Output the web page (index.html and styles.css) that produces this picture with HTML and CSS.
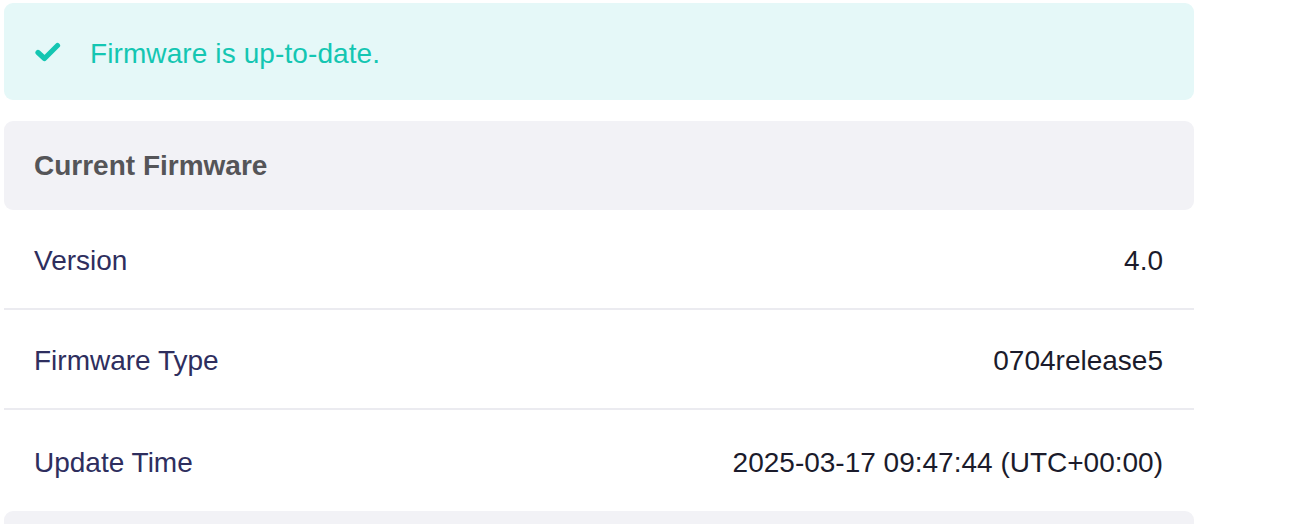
FILE: index.html
```html
<!DOCTYPE html>
<html>
<head>
<meta charset="utf-8">
<link rel="stylesheet" href="styles.css">
</head>
<body>
<div class="page">
  <div class="alert">
    <svg class="check" viewBox="0 0 26 20" width="26" height="20"><polyline points="3,10.5 9.5,16.5 22.5,3.5" fill="none" stroke="#14c6b2" stroke-width="5.2" stroke-linecap="round" stroke-linejoin="round"/></svg>
    <span class="alert-text">Firmware is up-to-date.</span>
  </div>
  <div class="section">
    <div class="section-head">Current Firmware</div>
    <div class="row"><span class="label">Version</span><span class="value">4.0</span></div>
    <div class="row"><span class="label">Firmware Type</span><span class="value">0704release5</span></div>
    <div class="row last"><span class="label">Update Time</span><span class="value">2025-03-17 09:47:44 (UTC+00:00)</span></div>
  </div>
  <div class="section-next"></div>
</div>
</body>
</html>
```
FILE: styles.css
```css
html, body {
  margin: 0;
  padding: 0;
  background: #ffffff;
  overflow: hidden;
}
body {
  font-family: "Liberation Sans", Arial, Helvetica, sans-serif;
  font-size: 28px;
}
.page {
  width: 1190px;
  padding: 3px 0 0 4px;
  display: flex;
  flex-direction: column;
}
.alert {
  height: 97px;
  box-sizing: border-box;
  background: #e5f8f8;
  border-radius: 9px;
  display: flex;
  align-items: center;
  padding-left: 31px;
  padding-top: 4px;
}
.check {
  display: block;
  margin-right: 29px;
  margin-top: -4px;
}
.alert-text {
  color: #14c6b2;
  font-size: 28px;
  letter-spacing: 0.1px;
}
.section {
  margin-top: 21px;
  display: flex;
  flex-direction: column;
}
.section-head {
  height: 89px;
  background: #f2f2f6;
  border-radius: 9px;
  display: flex;
  align-items: center;
  padding-left: 30px;
  font-weight: bold;
  color: #555558;
  font-size: 28px;
}
.row {
  height: 100px;
  box-sizing: border-box;
  border-bottom: 2px solid #ebebf0;
  display: flex;
  align-items: center;
  justify-content: space-between;
  padding: 4px 31px 0 30px;
}
.row.last {
  border-bottom: none;
  height: 101px;
}
.label {
  color: #2e2e5e;
}
.value {
  color: #1b1b2b;
}
.section-next {
  height: 13px;
  background: #f2f2f6;
  border-radius: 9px 9px 0 0;
}
```
